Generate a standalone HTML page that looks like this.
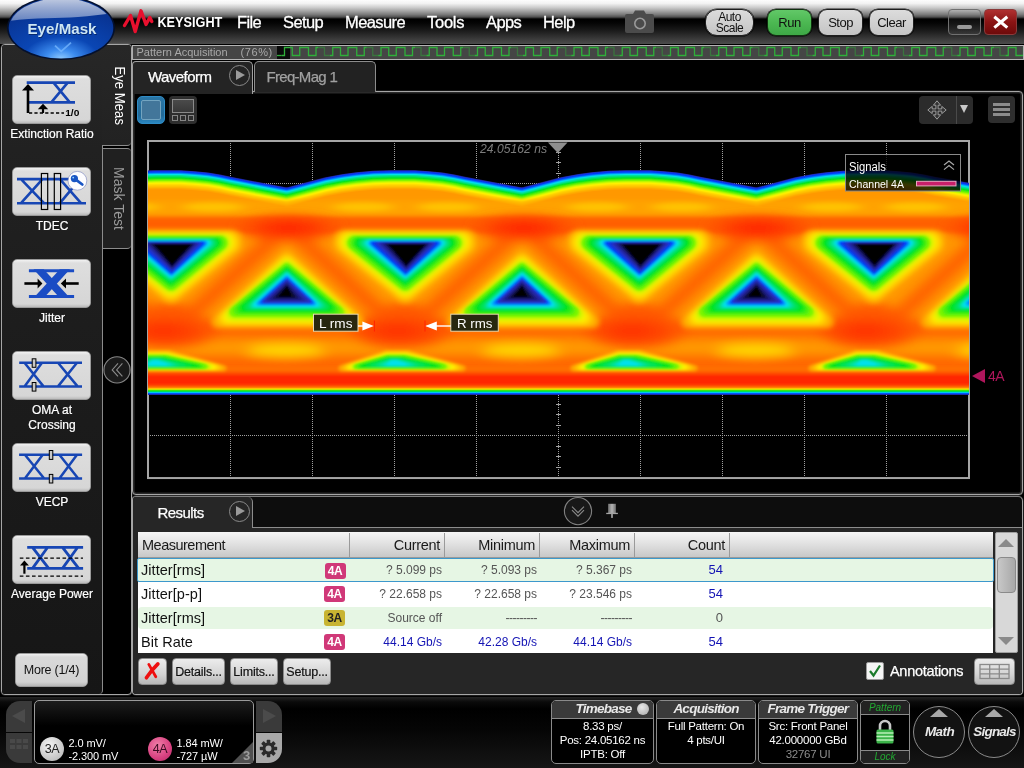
<!DOCTYPE html>
<html lang="en">
<head>
<meta charset="utf-8">
<title>Eye/Mask</title>
<style>
*{box-sizing:border-box;margin:0;padding:0}
html,body{width:1024px;height:768px;overflow:hidden;background:#000}
body{position:relative;font-family:"Liberation Sans",sans-serif;color:#fff;font-size:13px;will-change:transform}
.abs{position:absolute}
/* ---------- top bar ---------- */
#topbar{position:absolute;left:0;top:0;width:1024px;height:45px;
 background:linear-gradient(to bottom,#fdfdfd 0px,#f2f2f2 3.5px,#cccccc 7.5px,#a4a4a4 11px,#7a7a7a 14.5px,#505050 17px,#000 19px,#050505 23px,#1c1c1c 31px,#3a3a3a 39px,#4c4c4c 44px,#000 44px,#000 45px)}
.menu{position:absolute;top:12px;font-size:16.5px;color:#fff;letter-spacing:-0.6px;-webkit-text-stroke:0.3px #fff;line-height:20px;white-space:nowrap}
.tbtn{position:absolute;top:9px;height:27px;border-radius:9px;border:1px solid #1e1e1e;
 background:linear-gradient(to bottom,#dcdcdc,#d0d0d0 50%,#c4c4c4);color:#111;font-size:13px;text-align:center;line-height:25px;letter-spacing:-0.5px;box-shadow:0 0 0 0.6px rgba(0,0,0,0.8)}
/* ---------- pattern bar ---------- */
#patbar{position:absolute;left:132px;top:45px;width:892px;height:15px;background:#454545;border:1px solid #b4b4b4}
#patbar span{position:absolute;left:3.5px;top:0px;font-size:11px;line-height:13px;color:#a8a8a8;white-space:pre}
/* ---------- left panel ---------- */
.lbtn{position:absolute;left:12px;width:79px;height:49px;border-radius:5px;background:linear-gradient(to bottom,#f2f2f2 0,#dedede 3px,#d6d6d6 44px,#a8a8a8 49px);border:1px solid #9a9a9a}
.llab{position:absolute;left:0;width:104px;text-align:center;font-size:12px;line-height:15px;color:#fff;-webkit-text-stroke:0.2px #fff}
/* ---------- panels ---------- */
.tabtxt{position:absolute;font-size:15px;letter-spacing:-0.55px;white-space:nowrap;-webkit-text-stroke:0.25px}
.playc{position:absolute;width:21px;height:21px;border-radius:50%;border:1.5px solid #8a8a8a}
.playc:after{content:"";position:absolute;left:6px;top:3.5px;border-left:9px solid #9a9a9a;border-top:5.5px solid transparent;border-bottom:5.5px solid transparent}
/* ---------- results ---------- */
.rbtn{position:absolute;top:658px;height:27px;border-radius:4px;border:1px solid #8a8a8a;background:linear-gradient(to bottom,#ececec,#d4d4d4 60%,#b8b8b8);color:#111;font-size:12.5px;line-height:27px;text-align:center;letter-spacing:-0.2px;-webkit-text-stroke:0.2px #111}
.row{position:absolute;left:138px;width:855px;height:24px}
.cell{position:absolute;top:0;height:24px;line-height:24px;white-space:nowrap}
.num{font-size:12px;text-align:right}
.nm{left:3px;font-size:14.5px;color:#111;letter-spacing:0.05px}
.badge{position:absolute;left:186px;top:4px;width:21px;height:16px;border-radius:3px;font-size:12px;font-weight:bold;line-height:16px;text-align:center;letter-spacing:-0.5px}
/* ---------- status bar ---------- */
.sbox{position:absolute;top:700px;height:64px;border:1px solid #8a8a8a;border-radius:5px;background:#000;overflow:hidden}
.sbox .hd{position:absolute;left:0;top:0;right:0;height:18px;background:#3a3a3a;border-bottom:1px solid #8a8a8a;font-weight:bold;font-style:italic;font-size:13.5px;line-height:16px;color:#e8e8e8;text-align:center;letter-spacing:-0.75px}
.sbox .ln{position:absolute;left:0;right:0;text-align:center;font-size:11.5px;line-height:14px;color:#fff;white-space:nowrap;letter-spacing:-0.25px}
</style>
</head>
<body>
<!-- ================= TOP BAR ================= -->
<div id="topbar"></div>
<!-- keysight logo -->
<svg class="abs" style="left:122px;top:8px" width="104" height="28" viewBox="0 0 104 28">
 <path d="M2.5 17.5 L8.5 7.5 L13.2 23.5 L19 2.8 L24 16.5 L27.8 9.5 L29.8 13.5" fill="none" stroke="#e8102e" stroke-width="3.4" stroke-linejoin="round" stroke-linecap="round"/>
 <text x="35.4" y="19" font-family="Liberation Sans, sans-serif" font-weight="bold" font-size="14.5" fill="#fff" textLength="65" lengthAdjust="spacingAndGlyphs">KEYSIGHT</text>
</svg>
<div class="menu" style="left:237px">File</div>
<div class="menu" style="left:283px">Setup</div>
<div class="menu" style="left:345px">Measure</div>
<div class="menu" style="left:427px;letter-spacing:-0.25px">Tools</div>
<div class="menu" style="left:486px">Apps</div>
<div class="menu" style="left:543px">Help</div>
<!-- camera -->
<svg class="abs" style="left:624px;top:9px" width="32" height="26" viewBox="0 0 32 26">
 <path d="M3 5 h6 l2 -3.5 h9 l2 3.5 h6 a2 2 0 0 1 2 2 v15 a2 2 0 0 1 -2 2 h-25 a2 2 0 0 1 -2 -2 v-15 a2 2 0 0 1 2 -2z" fill="#4b4b4b"/>
 <circle cx="16" cy="14.5" r="5.2" fill="none" stroke="#9a9a9a" stroke-width="1.6"/>
</svg>
<div class="tbtn" style="left:705px;width:49px;font-size:12px;line-height:11px;padding-top:2px;border-radius:12px">Auto<br>Scale</div>
<div class="tbtn" style="left:767px;width:45px;background:linear-gradient(to bottom,#62c868,#4cb852 50%,#3ea846);border-color:#10300f">Run</div>
<div class="tbtn" style="left:818px;width:45px">Stop</div>
<div class="tbtn" style="left:869px;width:45px">Clear</div>
<!-- min / close -->
<div class="abs" style="left:948px;top:9px;width:33px;height:26px;border:1px solid #707070;border-radius:4px;background:linear-gradient(to bottom,rgba(255,255,255,0.04),rgba(255,255,255,0.08))"></div>
<div class="abs" style="left:957px;top:25px;width:15px;height:4px;border-radius:2px;background:#9a9a9a"></div>
<div class="abs" style="left:984px;top:9px;width:33px;height:26px;border:1px solid #8a3a3a;border-radius:4px;background:linear-gradient(to bottom,#b03030,#8a1414 50%,#6e0a0a)"></div>
<svg class="abs" style="left:984px;top:9px" width="33" height="26" viewBox="0 0 33 26"><path d="M10.3 7.8 L23.3 18.6 M23.3 7.8 L10.3 18.6" stroke="#fff" stroke-width="3.1" stroke-linecap="butt"/></svg>
<!-- pattern bar -->
<div id="patbar"><span>Pattern Acquisition</span><span style="left:107.5px;letter-spacing:0.6px">(76%)</span></div>
<div class="abs" style="left:277px;top:46px;width:13px;height:13px;background:#0a0a0a"></div>
<svg class="abs" style="left:277px;top:46px" width="746" height="13" viewBox="0 0 746 13">
 <defs>
  <g id="pw">
   <path d="M-2.75 9.5 H0 V1.5 H7.75 V9.5 H15.25 V1.5 H24 V9.5 H31.5 V1.5 H34" fill="none" stroke="#2fb03a" stroke-width="1.3"/>
   <path d="M34 1.5 H40 V9.5 H45.5" fill="none" stroke="#3a743e" stroke-width="1.3"/>
  </g>
 </defs>
 <path d="M0 9.5 H4.75" fill="none" stroke="#2fb03a" stroke-width="1.3"/>
 <use href="#pw" x="7.5"/><use href="#pw" x="55.75"/><use href="#pw" x="104"/><use href="#pw" x="152.25"/><use href="#pw" x="200.5"/><use href="#pw" x="248.75"/><use href="#pw" x="297"/><use href="#pw" x="345.25"/><use href="#pw" x="393.5"/><use href="#pw" x="441.75"/><use href="#pw" x="490"/><use href="#pw" x="538.25"/><use href="#pw" x="586.5"/><use href="#pw" x="634.75"/><use href="#pw" x="683"/><use href="#pw" x="731.25"/>
</svg>
<!-- ================= LEFT PANEL ================= -->
<div class="abs" style="left:1px;top:44px;width:131px;height:651px;background:#000;border:1px solid #a6a6a6;border-radius:4px;box-shadow:0 0 0 0.5px rgba(150,150,150,0.35)"></div>
<!-- main body -->
<div class="abs" style="left:2px;top:45px;width:101px;height:649px;background:linear-gradient(to bottom,#272727 0,#212121 16%,#1c1c1c 50%,#161616 100%);border-right:1px solid #8c8c8c;border-radius:3px 0 4px 3px"></div>
<!-- Eye Meas tab (active) -->
<div class="abs" style="left:102px;top:45px;width:29px;height:101px;background:linear-gradient(to bottom,#272727,#222222);border-bottom:1px solid #8c8c8c;border-radius:0 3px 4px 0"></div>
<svg class="abs" style="left:103px;top:60px" width="29" height="90"><text transform="translate(12,6.5) rotate(90)" font-family="Liberation Sans, sans-serif" font-size="15" fill="#fff" textLength="58.5" lengthAdjust="spacingAndGlyphs">Eye Meas</text></svg>
<!-- Mask Test tab -->
<div class="abs" style="left:102px;top:148px;width:29px;height:101px;background:#202020;border:1px solid #8c8c8c;border-right:none;border-radius:0 4px 4px 0"></div>
<svg class="abs" style="left:103px;top:150px" width="28" height="100"><text transform="translate(10.5,17) rotate(90)" font-family="Liberation Sans, sans-serif" font-size="15" fill="#9a9a9a" textLength="63" lengthAdjust="spacingAndGlyphs">Mask Test</text></svg>
<!-- collapse button -->
<svg class="abs" style="left:103px;top:356px" width="28" height="28" viewBox="0 0 28 28"><circle cx="14" cy="13.9" r="13.1" fill="#1a1a1a" stroke="#868686" stroke-width="1.1"/><path d="M15 7.4 L9.2 13.9 L15 20.4 M19.4 7.4 L13.6 13.9 L19.4 20.4" fill="none" stroke="#8a8a8a" stroke-width="1.1"/></svg>

<!-- 1 Extinction Ratio -->
<div class="lbtn" style="top:75px"></div>
<svg class="abs" style="left:12px;top:75px" width="79" height="49" viewBox="0 0 79 49">
 <g stroke="#1746b4" stroke-width="2.6" fill="none"><path d="M14.7 7.6 H63 M17 27.4 H63 M41.5 7.6 L57.8 27.4 M39.3 27.4 L55.7 7.6"/></g>
 <path d="M16 38 V12" stroke="#000" stroke-width="2.6" fill="none"/><path d="M10 15.6 L16 9 L22 15.6z" fill="#000"/>
 <path d="M17 38 H52" stroke="#000" stroke-width="1.3" stroke-dasharray="3.2 2.2" fill="none"/>
 <path d="M31 38 V32" stroke="#000" stroke-width="2.2"/><path d="M25.8 34.2 L31 28.8 L36.2 34.2z" fill="#000"/>
 <text x="53.2" y="41" font-family="Liberation Sans, sans-serif" font-weight="bold" font-size="9" fill="#000" textLength="14.2" lengthAdjust="spacingAndGlyphs">1/0</text>
</svg>
<div class="llab" style="top:127px">Extinction Ratio</div>
<!-- 2 TDEC -->
<div class="lbtn" style="top:167px"></div>
<svg class="abs" style="left:12px;top:167px" width="79" height="49" viewBox="0 0 79 49">
 <g stroke="#1746b4" stroke-width="2.6" fill="none"><path d="M5 12.1 H58 M5 36.2 H74 M9 12.1 L32 36.2 M9 36.2 L30.5 12.1 M47.9 12.1 L69 36.2 M47.9 36.2 L68 12.1"/></g>
 <rect x="29.4" y="6.5" width="6.3" height="36" fill="none" stroke="#000" stroke-width="1.2"/>
 <rect x="42.3" y="6.5" width="6.3" height="36" fill="none" stroke="#000" stroke-width="1.2"/>
 <circle cx="65.4" cy="13.8" r="9.4" fill="#fdfdff" stroke="#8a94c4" stroke-width="0.7"/>
 <circle cx="62.4" cy="11.6" r="3.6" fill="#1a56c4"/><path d="M63.5 12.4 L70.3 17.5" stroke="#1a56c4" stroke-width="2.8" stroke-linecap="round"/><circle cx="61.2" cy="10.6" r="0.9" fill="#9adcff"/>
</svg>
<div class="llab" style="top:219px">TDEC</div>
<!-- 3 Jitter -->
<div class="lbtn" style="top:259px"></div>
<svg class="abs" style="left:12px;top:259px" width="79" height="49" viewBox="0 0 79 49">
 <g stroke="#1a4cc4" fill="none"><path d="M16.9 11.8 H62.1 M16.9 37.4 H62.1" stroke-width="3"/></g><path d="M21.5 10.3 H31.7 L58 38.9 H47.9 Z" fill="#1a4cc4"/><path d="M58 10.3 H47.9 L21.5 38.9 H31.7 Z" fill="#1a4cc4"/>
 <path d="M12.4 24.5 H26" stroke="#000" stroke-width="2.6"/><path d="M25.6 19.5 L30.4 24.5 L25.6 29.5z" fill="#000"/>
 <path d="M66.7 24.5 H53.5" stroke="#000" stroke-width="2.6"/><path d="M54 19.5 L48.8 24.5 L54 29.5z" fill="#000"/>
</svg>
<div class="llab" style="top:311px">Jitter</div>
<!-- 4 OMA at Crossing -->
<div class="lbtn" style="top:351px"></div>
<svg class="abs" style="left:12px;top:351px" width="79" height="49" viewBox="0 0 79 49">
 <g stroke="#1746b4" stroke-width="2.5" fill="none"><path d="M7.2 11.7 H70 M7.2 35.4 H70 M12.5 11.7 L31.5 35.4 M12.5 35.4 L30 11.7 M46 11.7 L65.6 35.4 M46 35.4 L65 11.7"/></g>
 <rect x="20.2" y="7.8" width="3.7" height="8.5" fill="#c8c8c8" stroke="#000" stroke-width="1"/>
 <rect x="20.2" y="31.5" width="3.7" height="8.6" fill="#c8c8c8" stroke="#000" stroke-width="1"/>
</svg>
<div class="llab" style="top:403px">OMA at<br>Crossing</div>
<!-- 5 VECP -->
<div class="lbtn" style="top:443px"></div>
<svg class="abs" style="left:12px;top:443px" width="79" height="49" viewBox="0 0 79 49">
 <g stroke="#1746b4" stroke-width="2.5" fill="none"><path d="M7.1 11.8 H70.1 M7.1 35.5 H70.1 M12.9 11.8 L32.2 35.5 M12.9 35.5 L30.7 11.8 M47.4 11.8 L66.2 35.5 M47.4 35.5 L65 11.8"/></g>
 <rect x="37.3" y="7.5" width="3.5" height="8.9" fill="#c8c8c8" stroke="#000" stroke-width="1"/>
 <rect x="37.3" y="31.4" width="3.5" height="8.6" fill="#c8c8c8" stroke="#000" stroke-width="1"/>
</svg>
<div class="llab" style="top:495px">VECP</div>
<!-- 6 Average Power -->
<div class="lbtn" style="top:535px"></div>
<svg class="abs" style="left:12px;top:535px" width="79" height="49" viewBox="0 0 79 49">
 <g stroke="#1746b4" stroke-width="2.8" fill="none"><path d="M15.2 12.3 H71.1 M15.2 33.4 H71.1 M20.5 12.3 L36.7 33.4 M20.5 33.4 L35.7 12.3 M50.5 12.3 L66.7 33.4 M50.5 33.4 L65.7 12.3"/></g>
 <path d="M7.8 23.2 H71 M7.8 41.2 H71" stroke="#000" stroke-width="1.3" stroke-dasharray="3.6 2.5" fill="none"/>
 <path d="M12.4 38.7 V29" stroke="#000" stroke-width="2.2"/><path d="M8 30.4 L12.4 25.6 L16.9 30.4z" fill="#000"/>
</svg>
<div class="llab" style="top:587px">Average Power</div>
<!-- More -->
<div class="lbtn" style="left:15px;top:653px;width:73px;height:34px;background:linear-gradient(to bottom,#f0f0f0 0,#dadada 3px,#d2d2d2 28px,#a8a8a8 34px);color:#111;font-size:12.5px;line-height:33px;text-align:center;letter-spacing:-0.2px">More (1/4)</div>
<!-- eye/mask button -->
<svg class="abs" style="left:0;top:0" width="130" height="66" viewBox="0 0 130 66">
 <defs>
  <radialGradient id="emg" cx="50%" cy="100%" r="80%" fx="50%" fy="100%">
   <stop offset="0" stop-color="#8cc8ff"/><stop offset="0.18" stop-color="#3c8cf0"/><stop offset="0.45" stop-color="#0a46b4"/><stop offset="1" stop-color="#083494"/>
  </radialGradient>
  <linearGradient id="emh" x1="0" y1="0" x2="0" y2="1">
   <stop offset="0" stop-color="#eef0f4" stop-opacity="0.85"/><stop offset="1" stop-color="#c4d0e8" stop-opacity="0.5"/>
  </linearGradient>
  <clipPath id="emc"><ellipse cx="61" cy="28" rx="51.5" ry="29.8"/></clipPath>
 </defs>
 <ellipse cx="61" cy="28" rx="54" ry="32" fill="#04102e"/>
 <ellipse cx="61" cy="28" rx="52.3" ry="30.5" fill="url(#emg)"/>
 <g clip-path="url(#emc)"><path d="M0 -4 H130 V12 C112 12.5 96 15.5 78 17 C58 18.5 36 17.5 8 21 Z" fill="url(#emh)"/></g>
 <text x="62.6" y="34.6" text-anchor="middle" font-family="Liberation Sans, sans-serif" font-weight="bold" font-size="15" fill="#06225e" opacity="0.8" textLength="69" lengthAdjust="spacingAndGlyphs">Eye/Mask</text>
 <text x="62" y="33.8" text-anchor="middle" font-family="Liberation Sans, sans-serif" font-weight="bold" font-size="15" fill="#cde6f4" textLength="69" lengthAdjust="spacingAndGlyphs">Eye/Mask</text>
 <path d="M55 45.6 L61.2 51.4 L71 42.6" fill="none" stroke="#78b8ff" stroke-width="1.8" opacity="0.75"/>
</svg>
<!-- ================= WAVEFORM PANEL ================= -->
<div class="abs" style="left:132px;top:91px;width:891px;height:404px;background:#000;border:1px solid #a6a6a6;border-radius:0 4px 4px 4px;box-shadow:inset 0 0 0 1.6px #2a2a2a, 0 0 0 0.5px rgba(150,150,150,0.3)"></div>
<!-- tabs -->
<div class="abs" style="left:132px;top:61px;width:121px;height:33px;background:#242424;border:1px solid #a0a0a0;border-bottom:none;border-radius:4px 5px 0 0"></div>
<div class="tabtxt" style="left:148px;top:68px;color:#fff">Waveform</div>
<div class="playc" style="left:229px;top:65px"></div>
<div class="abs" style="left:254px;top:61px;width:122px;height:31px;background:#222;border:1px solid #8c8c8c;border-bottom:none;border-radius:5px 5px 0 0"></div>
<div class="tabtxt" style="left:266.5px;top:68px;color:#a0a0a0;letter-spacing:-0.7px">Freq-Mag 1</div>
<!-- layout icons -->
<div class="abs" style="left:137px;top:96px;width:28px;height:28px;border-radius:5px;background:linear-gradient(to bottom,#2a76a6,#236a98 70%,#2a86c0);border:1px solid #2f8cc6"></div>
<div class="abs" style="left:141px;top:100px;width:20px;height:20px;border-radius:2px;background:#42769a;border:1px solid #72a4c0"></div>
<div class="abs" style="left:169px;top:96px;width:28px;height:28px;border-radius:4px;background:#2e2e2e"></div>
<div class="abs" style="left:172px;top:99px;width:22px;height:14px;background:linear-gradient(to bottom,#4a4a4a,#383838);border:1px solid #8a8a8a"></div>
<div class="abs" style="left:172px;top:115px;width:6px;height:6px;border:1px solid #868686"></div>
<div class="abs" style="left:180px;top:115px;width:6px;height:6px;border:1px solid #868686"></div>
<div class="abs" style="left:188px;top:115px;width:6px;height:6px;border:1px solid #868686"></div>
<!-- move / menu -->
<div class="abs" style="left:919px;top:96px;width:54px;height:28px;border-radius:4px;background:#2b2b2b"></div>
<div class="abs" style="left:956px;top:96px;width:1px;height:28px;background:#4a4a4a"></div>
<svg class="abs" style="left:927px;top:100px" width="20" height="20" viewBox="0 0 20 20"><path d="M10 0.8 L13.6 5.2 H11.1 V8.9 H14.8 V6.4 L19.2 10 L14.8 13.6 V11.1 H11.1 V14.8 H13.6 L10 19.2 L6.4 14.8 H8.9 V11.1 H5.2 V13.6 L0.8 10 L5.2 6.4 V8.9 H8.9 V5.2 H6.4 Z" fill="#333" stroke="#a8a8a8" stroke-width="0.9"/></svg>
<div class="abs" style="left:960px;top:105px;border-top:8px solid #c8c8c8;border-left:4px solid transparent;border-right:4px solid transparent"></div>
<div class="abs" style="left:988px;top:96px;width:27px;height:27px;border-radius:4px;background:#2e2e2e"></div>
<div class="abs" style="left:993px;top:103px;width:17px;height:3px;background:#8c8c8c"></div>
<div class="abs" style="left:993px;top:108px;width:17px;height:3px;background:#8c8c8c"></div>
<div class="abs" style="left:993px;top:113px;width:17px;height:3px;background:#8c8c8c"></div>
<svg class="abs" style="left:146px;top:139px" width="827" height="343" viewBox="146 139 827 343">
<defs>
<clipPath id="pc"><rect x="148" y="142" width="821" height="335"/></clipPath>
<filter id="f1" filterUnits="userSpaceOnUse" x="60" y="120" width="1000" height="320"><feGaussianBlur stdDeviation="1.1"/></filter>
<filter id="f0" filterUnits="userSpaceOnUse" x="60" y="120" width="1000" height="320"><feGaussianBlur stdDeviation="1.2 0.75"/></filter>
<filter id="f2" filterUnits="userSpaceOnUse" x="60" y="120" width="1000" height="320"><feGaussianBlur stdDeviation="1.5"/></filter>
<filter id="f3" filterUnits="userSpaceOnUse" x="60" y="120" width="1000" height="320"><feGaussianBlur stdDeviation="2.6"/></filter>
<filter id="f9" filterUnits="userSpaceOnUse" x="60" y="120" width="1000" height="320"><feGaussianBlur stdDeviation="7 2.2"/></filter>
<filter id="f8" filterUnits="userSpaceOnUse" x="60" y="120" width="1000" height="320"><feGaussianBlur stdDeviation="7 5"/></filter>
<g id="dn">
<polygon points="-60,242.8 60,242.8 0,291" fill="#ff9800" stroke="#ff9800" stroke-width="26" stroke-linejoin="round"/>
<polygon points="-59.3,242.7 59.2,242.7 0,290.3" fill="#ffa600" stroke="#ffa600" stroke-width="24.7" stroke-linejoin="round"/>
<polygon points="-58.7,242.6 58.3,242.6 0,289.7" fill="#ffb500" stroke="#ffb500" stroke-width="23.3" stroke-linejoin="round"/>
<polygon points="-58,242.5 57.5,242.5 0,289" fill="#ffc300" stroke="#ffc300" stroke-width="22" stroke-linejoin="round"/>
<polygon points="-56.7,242.4 56,242.4 0,288" fill="#ffd200" stroke="#ffd200" stroke-width="20.7" stroke-linejoin="round"/>
<polygon points="-55.3,242.3 54.5,242.3 0,287" fill="#ffe100" stroke="#ffe100" stroke-width="19.3" stroke-linejoin="round"/>
<polygon points="-54,242.2 53,242.2 0,286" fill="#fff000" stroke="#fff000" stroke-width="18" stroke-linejoin="round"/>
<polygon points="-52.8,242.5 51.7,242.5 0,285" fill="#def700" stroke="#def700" stroke-width="16.7" stroke-linejoin="round"/>
<polygon points="-51.7,242.7 50.3,242.7 0,284" fill="#b0f800" stroke="#b0f800" stroke-width="15.3" stroke-linejoin="round"/>
<polygon points="-50.5,243 49,243 0,283" fill="#78f500" stroke="#78f500" stroke-width="14" stroke-linejoin="round"/>
</g>
<g id="dni">
<polygon points="-50.5,243 49,243 0,283" fill="#78f500" stroke="#78f500" stroke-width="14" stroke-linejoin="round"/>
<polygon points="-48.7,243 47.3,243 0,281.7" fill="#50ef0a" stroke="#50ef0a" stroke-width="12.7" stroke-linejoin="round"/>
<polygon points="-46.8,243 45.7,243 0,280.3" fill="#28ea14" stroke="#28ea14" stroke-width="11.3" stroke-linejoin="round"/>
<polygon points="-45,243 44,243 0,279" fill="#00e41e" stroke="#00e41e" stroke-width="10" stroke-linejoin="round"/>
<polygon points="-43.3,243.1 42.5,243.1 0,278" fill="#00e33c" stroke="#00e33c" stroke-width="9.3" stroke-linejoin="round"/>
<polygon points="-41.7,243.2 41,243.2 0,277" fill="#00e25a" stroke="#00e25a" stroke-width="8.7" stroke-linejoin="round"/>
<polygon points="-40,243.3 39.5,243.3 0,276" fill="#00e178" stroke="#00e178" stroke-width="8" stroke-linejoin="round"/>
<polygon points="-38.5,243.3 38.2,243.3 0,275.3" fill="#00e19e" stroke="#00e19e" stroke-width="7.3" stroke-linejoin="round"/>
<polygon points="-37,243.2 36.8,243.2 0,274.7" fill="#00e1c5" stroke="#00e1c5" stroke-width="6.7" stroke-linejoin="round"/>
<polygon points="-35.5,243.2 35.5,243.2 0,274" fill="#00e1eb" stroke="#00e1eb" stroke-width="6" stroke-linejoin="round"/>
<polygon points="-34.2,243.2 34,243.2 0.2,273.2" fill="#00a7fb" stroke="#00a7fb" stroke-width="5.3" stroke-linejoin="round"/>
<polygon points="-32.8,243.3 32.5,243.3 0.3,272.3" fill="#0070fd" stroke="#0070fd" stroke-width="4.7" stroke-linejoin="round"/>
<polygon points="-31.5,243.3 31,243.3 0.5,271.5" fill="#003cfa" stroke="#003cfa" stroke-width="4" stroke-linejoin="round"/>
<polygon points="-29.7,243.5 29.7,243.5 0.7,270.7" fill="#0d38e6" stroke="#0d38e6" stroke-width="3.7" stroke-linejoin="round"/>
<polygon points="-27.8,243.6 28.3,243.6 0.8,269.8" fill="#1b34d2" stroke="#1b34d2" stroke-width="3.3" stroke-linejoin="round"/>
<polygon points="-26,243.8 27,243.8 1,269" fill="#2830be" stroke="#2830be" stroke-width="3" stroke-linejoin="round"/>
<polygon points="-24.3,243.9 25.7,243.9 1,268.4" fill="#252aaa" stroke="#252aaa" stroke-width="2.7" stroke-linejoin="round"/>
<polygon points="-22.7,243.9 24.3,243.9 1,267.9" fill="#212496" stroke="#212496" stroke-width="2.3" stroke-linejoin="round"/>
<polygon points="-21,244 23,244 1,267.3" fill="#1e1e82" stroke="#1e1e82" stroke-width="2" stroke-linejoin="round"/>
<polygon points="-19.2,244.2 21.7,244.2 1,266.4" fill="#141457" stroke="#141457" stroke-width="1.7" stroke-linejoin="round"/>
<polygon points="-17.3,244.5 20.3,244.5 1,265.4" fill="#0a0a2b" stroke="#0a0a2b" stroke-width="1.3" stroke-linejoin="round"/>
<polygon points="-15.5,244.7 19,244.7 1,264.5" fill="#000000" stroke="#000000" stroke-width="1" stroke-linejoin="round"/>
</g>
<g id="up">
<polygon points="0,256 71,321.5 -69,321.5" fill="#ff9800" stroke="#ff9800" stroke-width="14" stroke-linejoin="round"/>
<polygon points="0,257.7 68.8,320.7 -66.8,320.7" fill="#ffa600" stroke="#ffa600" stroke-width="13.7" stroke-linejoin="round"/>
<polygon points="0,259.3 66.7,319.8 -64.7,319.8" fill="#ffb500" stroke="#ffb500" stroke-width="13.3" stroke-linejoin="round"/>
<polygon points="0,261 64.5,319 -62.5,319" fill="#ffc300" stroke="#ffc300" stroke-width="13" stroke-linejoin="round"/>
<polygon points="0,262.3 62.5,318.2 -60.7,318.2" fill="#ffd200" stroke="#ffd200" stroke-width="12.7" stroke-linejoin="round"/>
<polygon points="0,263.7 60.5,317.3 -58.8,317.3" fill="#ffe100" stroke="#ffe100" stroke-width="12.3" stroke-linejoin="round"/>
<polygon points="0,265 58.5,316.5 -57,316.5" fill="#fff000" stroke="#fff000" stroke-width="12" stroke-linejoin="round"/>
<polygon points="0,266.2 56.2,314.8 -55.3,314.8" fill="#def700" stroke="#def700" stroke-width="11.3" stroke-linejoin="round"/>
<polygon points="0,267.3 53.8,313.2 -53.7,313.2" fill="#b0f800" stroke="#b0f800" stroke-width="10.7" stroke-linejoin="round"/>
<polygon points="0,268.5 51.5,311.5 -52,311.5" fill="#78f500" stroke="#78f500" stroke-width="10" stroke-linejoin="round"/>
</g>
<g id="upi">
<polygon points="0,268.5 51.5,311.5 -52,311.5" fill="#78f500" stroke="#78f500" stroke-width="10" stroke-linejoin="round"/>
<polygon points="0,269.7 48.3,310.2 -48.7,310.2" fill="#50ef0a" stroke="#50ef0a" stroke-width="9.3" stroke-linejoin="round"/>
<polygon points="0,270.8 45.2,308.8 -45.3,308.8" fill="#28ea14" stroke="#28ea14" stroke-width="8.7" stroke-linejoin="round"/>
<polygon points="0,272 42,307.5 -42,307.5" fill="#00e41e" stroke="#00e41e" stroke-width="8" stroke-linejoin="round"/>
<polygon points="0,272.8 39.7,306.9 -39.7,306.9" fill="#00e33c" stroke="#00e33c" stroke-width="7.3" stroke-linejoin="round"/>
<polygon points="0,273.7 37.3,306.4 -37.3,306.4" fill="#00e25a" stroke="#00e25a" stroke-width="6.7" stroke-linejoin="round"/>
<polygon points="0,274.5 35,305.8 -35,305.8" fill="#00e178" stroke="#00e178" stroke-width="6" stroke-linejoin="round"/>
<polygon points="0,275.2 33,305.4 -33.5,305.4" fill="#00e19e" stroke="#00e19e" stroke-width="5.7" stroke-linejoin="round"/>
<polygon points="0,275.8 31,304.9 -32,304.9" fill="#00e1c5" stroke="#00e1c5" stroke-width="5.3" stroke-linejoin="round"/>
<polygon points="0,276.5 29,304.5 -30.5,304.5" fill="#00e1eb" stroke="#00e1eb" stroke-width="5" stroke-linejoin="round"/>
<polygon points="0,277.8 27.2,303.5 -28.2,303.5" fill="#00a7fb" stroke="#00a7fb" stroke-width="4.7" stroke-linejoin="round"/>
<polygon points="0,279.2 25.3,302.6 -25.8,302.6" fill="#0070fd" stroke="#0070fd" stroke-width="4.3" stroke-linejoin="round"/>
<polygon points="0,280.5 23.5,301.6 -23.5,301.6" fill="#003cfa" stroke="#003cfa" stroke-width="4" stroke-linejoin="round"/>
<polygon points="0,280.8 23,301.5 -23,301.5" fill="#0d38e6" stroke="#0d38e6" stroke-width="3.7" stroke-linejoin="round"/>
<polygon points="0,281.2 22.5,301.4 -22.5,301.4" fill="#1b34d2" stroke="#1b34d2" stroke-width="3.3" stroke-linejoin="round"/>
<polygon points="0,281.5 22,301.3 -22,301.3" fill="#2830be" stroke="#2830be" stroke-width="3" stroke-linejoin="round"/>
<polygon points="0,282.3 19.3,300.5 -20,300.5" fill="#252aaa" stroke="#252aaa" stroke-width="2.7" stroke-linejoin="round"/>
<polygon points="0,283.2 16.7,299.8 -18,299.8" fill="#212496" stroke="#212496" stroke-width="2.3" stroke-linejoin="round"/>
<polygon points="0,284 14,299 -16,299" fill="#1e1e82" stroke="#1e1e82" stroke-width="2" stroke-linejoin="round"/>
<polygon points="0,285.2 10.8,298 -13.2,298" fill="#141457" stroke="#141457" stroke-width="1.7" stroke-linejoin="round"/>
<polygon points="0,286.3 7.7,297 -10.3,297" fill="#0a0a2b" stroke="#0a0a2b" stroke-width="1.3" stroke-linejoin="round"/>
<polygon points="0,287.5 4.5,296 -7.5,296" fill="#000000" stroke="#000000" stroke-width="1" stroke-linejoin="round"/>
</g>
<g id="ln">
<polygon points="-15.8,353 7.2,353 62,368.2 -60,368.2" fill="#ff9800" stroke="#ff9800" stroke-width="6" stroke-linejoin="round"/>
<polygon points="-15.4,353.5 6.9,353.5 60.1,368 -58.1,368" fill="#ffa600" stroke="#ffa600" stroke-width="5.9" stroke-linejoin="round"/>
<polygon points="-15,354.1 6.6,354.1 58.1,367.9 -56.1,367.9" fill="#ffb500" stroke="#ffb500" stroke-width="5.7" stroke-linejoin="round"/>
<polygon points="-14.6,354.6 6.3,354.6 56.2,367.7 -54.2,367.7" fill="#ffc300" stroke="#ffc300" stroke-width="5.6" stroke-linejoin="round"/>
<polygon points="-14.4,355.1 5.8,355.1 54.3,367.5 -52.6,367.5" fill="#ffd200" stroke="#ffd200" stroke-width="5.5" stroke-linejoin="round"/>
<polygon points="-14.2,355.5 5.4,355.5 52.3,367.4 -51,367.4" fill="#ffe100" stroke="#ffe100" stroke-width="5.3" stroke-linejoin="round"/>
<polygon points="-14,356 4.9,356 50.4,367.2 -49.4,367.2" fill="#fff000" stroke="#fff000" stroke-width="5.2" stroke-linejoin="round"/>
<polygon points="-13.7,356.5 4.4,356.5 47.9,367 -47.9,367" fill="#def700" stroke="#def700" stroke-width="4.9" stroke-linejoin="round"/>
<polygon points="-13.5,357.1 3.9,357.1 45.3,366.7 -46.3,366.7" fill="#b0f800" stroke="#b0f800" stroke-width="4.7" stroke-linejoin="round"/>
<polygon points="-13.2,357.6 3.4,357.6 42.8,366.5 -44.8,366.5" fill="#78f500" stroke="#78f500" stroke-width="4.4" stroke-linejoin="round"/>
</g>
<g id="lni">
<polygon points="-13.2,357.6 3.4,357.6 42.8,366.5 -44.8,366.5" fill="#78f500" stroke="#78f500" stroke-width="4.4" stroke-linejoin="round"/>
<polygon points="-13,358.1 2.6,358.1 39.9,366.3 -42.6,366.3" fill="#50ef0a" stroke="#50ef0a" stroke-width="4.1" stroke-linejoin="round"/>
<polygon points="-12.8,358.5 1.8,358.5 37.1,366.1 -40.4,366.1" fill="#28ea14" stroke="#28ea14" stroke-width="3.9" stroke-linejoin="round"/>
<polygon points="-12.6,359 1.1,359 34.2,365.9 -38.2,365.9" fill="#00e41e" stroke="#00e41e" stroke-width="3.6" stroke-linejoin="round"/>
<polygon points="-11.8,359.4 -0.2,359.4 28,365.6 -33.3,365.6" fill="#00e33c" stroke="#00e33c" stroke-width="3.4" stroke-linejoin="round"/>
<polygon points="-11,359.9 -1.4,359.9 21.7,365.4 -28.4,365.4" fill="#00e25a" stroke="#00e25a" stroke-width="3.2" stroke-linejoin="round"/>
<polygon points="-10.2,360.3 -2.6,360.3 15.5,365.1 -23.5,365.1" fill="#00e178" stroke="#00e178" stroke-width="3" stroke-linejoin="round"/>
<polygon points="-9.8,360.7 -3.6,360.7 11.6,364.9 -19.9,364.9" fill="#00e19e" stroke="#00e19e" stroke-width="2.8" stroke-linejoin="round"/>
<polygon points="-9.3,361.2 -4.5,361.2 7.7,364.6 -16.4,364.6" fill="#00e1c5" stroke="#00e1c5" stroke-width="2.6" stroke-linejoin="round"/>
<polygon points="-8.9,361.6 -5.5,361.6 3.8,364.4 -12.8,364.4" fill="#00e1eb" stroke="#00e1eb" stroke-width="2.4" stroke-linejoin="round"/>
</g>
</defs>
<rect x="148" y="141" width="821" height="337.05" fill="#000" stroke="#a6a6a6" stroke-width="2"/>
<g stroke="#a0a0a0" stroke-width="1" stroke-dasharray="1 1" fill="none">
<path d="M230.5 143 V477"/>
<path d="M312.5 143 V477"/>
<path d="M394.5 143 V477"/>
<path d="M476.5 143 V477"/>
<path d="M558.5 143 V477"/>
<path d="M640.5 143 V477"/>
<path d="M722.5 143 V477"/>
<path d="M804.5 143 V477"/>
<path d="M886.5 143 V477"/>
<path d="M150 183.5 H968"/>
<path d="M150 225.5 H968"/>
<path d="M150 267.5 H968"/>
<path d="M150 309.5 H968"/>
<path d="M150 351.5 H968"/>
<path d="M150 393.5 H968"/>
<path d="M150 435.5 H968"/>
</g>
<path d="M556 152.5 h5 M556 162.5 h5 M556 173.5 h5 M556 194.5 h5 M556 204.5 h5 M556 215.5 h5 M556 236.5 h5 M556 246.5 h5 M556 257.5 h5 M556 278.5 h5 M556 288.5 h5 M556 299.5 h5 M556 320.5 h5 M556 330.5 h5 M556 341.5 h5 M556 362.5 h5 M556 372.5 h5 M556 383.5 h5 M556 404.5 h5 M556 414.5 h5 M556 425.5 h5 M556 446.5 h5 M556 456.5 h5 M556 467.5 h5" stroke="#a0a0a0" stroke-width="1" fill="none"/>
<g clip-path="url(#pc)">
<g filter="url(#f0)">
<path d="M52.5 187.6 L91.5 177.3 Q120.5 170.6 156.5 170.2 L180.5 170.2 Q210.5 171.6 230.5 176.8 L286.8 187.6 L325.8 177.3 Q354.8 170.6 390.8 170.2 L414.8 170.2 Q444.8 171.6 464.8 176.8 L522 187.6 L561 177.3 Q590 170.6 626 170.2 L650 170.2 Q680 171.6 700 176.8 L756.5 187.6 L795.5 177.3 Q824.5 170.6 860.5 170.2 L884.5 170.2 Q914.5 171.6 934.5 176.8 L996 187.6 V394.7 H52.5 Z" fill="#252bad"/>
<path d="M52.5 188.1 L91.5 177.8 Q120.5 171.1 156.5 170.7 L180.5 170.7 Q210.5 172.1 230.5 177.3 L286.8 188.1 L325.8 177.8 Q354.8 171.1 390.8 170.7 L414.8 170.7 Q444.8 172.1 464.8 177.3 L522 188.1 L561 177.8 Q590 171.1 626 170.7 L650 170.7 Q680 172.1 700 177.3 L756.5 188.1 L795.5 177.8 Q824.5 171.1 860.5 170.7 L884.5 170.7 Q914.5 172.1 934.5 177.3 L996 188.1 V394.4 H52.5 Z" fill="#2132c8"/>
<path d="M52.5 188.5 L91.5 178.2 Q120.5 171.5 156.5 171.1 L180.5 171.1 Q210.5 172.5 230.5 177.7 L286.8 188.5 L325.8 178.2 Q354.8 171.5 390.8 171.1 L414.8 171.1 Q444.8 172.5 464.8 177.7 L522 188.5 L561 178.2 Q590 171.5 626 171.1 L650 171.1 Q680 172.5 700 177.7 L756.5 188.5 L795.5 178.2 Q824.5 171.5 860.5 171.1 L884.5 171.1 Q914.5 172.5 934.5 177.7 L996 188.5 V394.2 H52.5 Z" fill="#1137e1"/>
<path d="M52.5 189 L91.5 178.7 Q120.5 172 156.5 171.6 L180.5 171.6 Q210.5 173 230.5 178.2 L286.8 189 L325.8 178.7 Q354.8 172 390.8 171.6 L414.8 171.6 Q444.8 173 464.8 178.2 L522 189 L561 178.7 Q590 172 626 171.6 L650 171.6 Q680 173 700 178.2 L756.5 189 L795.5 178.7 Q824.5 172 860.5 171.6 L884.5 171.6 Q914.5 173 934.5 178.2 L996 189 V393.9 H52.5 Z" fill="#003cfa"/>
<path d="M52.5 189.8 L91.5 179.5 Q120.5 172.8 156.5 172.4 L180.5 172.4 Q210.5 173.8 230.5 179 L286.8 189.8 L325.8 179.5 Q354.8 172.8 390.8 172.4 L414.8 172.4 Q444.8 173.8 464.8 179 L522 189.8 L561 179.5 Q590 172.8 626 172.4 L650 172.4 Q680 173.8 700 179 L756.5 189.8 L795.5 179.5 Q824.5 172.8 860.5 172.4 L884.5 172.4 Q914.5 173.8 934.5 179 L996 189.8 V393.5 H52.5 Z" fill="#0070fd"/>
<path d="M52.5 190.6 L91.5 180.3 Q120.5 173.6 156.5 173.2 L180.5 173.2 Q210.5 174.6 230.5 179.8 L286.8 190.6 L325.8 180.3 Q354.8 173.6 390.8 173.2 L414.8 173.2 Q444.8 174.6 464.8 179.8 L522 190.6 L561 180.3 Q590 173.6 626 173.2 L650 173.2 Q680 174.6 700 179.8 L756.5 190.6 L795.5 180.3 Q824.5 173.6 860.5 173.2 L884.5 173.2 Q914.5 174.6 934.5 179.8 L996 190.6 V393 H52.5 Z" fill="#00a7fb"/>
<path d="M52.5 191.4 L91.5 181.1 Q120.5 174.4 156.5 174 L180.5 174 Q210.5 175.4 230.5 180.6 L286.8 191.4 L325.8 181.1 Q354.8 174.4 390.8 174 L414.8 174 Q444.8 175.4 464.8 180.6 L522 191.4 L561 181.1 Q590 174.4 626 174 L650 174 Q680 175.4 700 180.6 L756.5 191.4 L795.5 181.1 Q824.5 174.4 860.5 174 L884.5 174 Q914.5 175.4 934.5 180.6 L996 191.4 V392.6 H52.5 Z" fill="#00e1eb"/>
<path d="M52.5 192.5 L91.5 182.2 Q120.5 175.5 156.5 175.1 L180.5 175.1 Q210.5 176.5 230.5 181.7 L286.8 192.5 L325.8 182.2 Q354.8 175.5 390.8 175.1 L414.8 175.1 Q444.8 176.5 464.8 181.7 L522 192.5 L561 182.2 Q590 175.5 626 175.1 L650 175.1 Q680 176.5 700 181.7 L756.5 192.5 L795.5 182.2 Q824.5 175.5 860.5 175.1 L884.5 175.1 Q914.5 176.5 934.5 181.7 L996 192.5 V392.1 H52.5 Z" fill="#00e19e"/>
<path d="M52.5 193.7 L91.5 183.4 Q120.5 176.7 156.5 176.3 L180.5 176.3 Q210.5 177.7 230.5 182.9 L286.8 193.7 L325.8 183.4 Q354.8 176.7 390.8 176.3 L414.8 176.3 Q444.8 177.7 464.8 182.9 L522 193.7 L561 183.4 Q590 176.7 626 176.3 L650 176.3 Q680 177.7 700 182.9 L756.5 193.7 L795.5 183.4 Q824.5 176.7 860.5 176.3 L884.5 176.3 Q914.5 177.7 934.5 182.9 L996 193.7 V391.7 H52.5 Z" fill="#00e25a"/>
<path d="M52.5 194.8 L91.5 184.5 Q120.5 177.8 156.5 177.4 L180.5 177.4 Q210.5 178.8 230.5 184 L286.8 194.8 L325.8 184.5 Q354.8 177.8 390.8 177.4 L414.8 177.4 Q444.8 178.8 464.8 184 L522 194.8 L561 184.5 Q590 177.8 626 177.4 L650 177.4 Q680 178.8 700 184 L756.5 194.8 L795.5 184.5 Q824.5 177.8 860.5 177.4 L884.5 177.4 Q914.5 178.8 934.5 184 L996 194.8 V391.2 H52.5 Z" fill="#00e41e"/>
<path d="M52.5 195.6 L91.5 185.3 Q120.5 178.6 156.5 178.2 L180.5 178.2 Q210.5 179.6 230.5 184.8 L286.8 195.6 L325.8 185.3 Q354.8 178.6 390.8 178.2 L414.8 178.2 Q444.8 179.6 464.8 184.8 L522 195.6 L561 185.3 Q590 178.6 626 178.2 L650 178.2 Q680 179.6 700 184.8 L756.5 195.6 L795.5 185.3 Q824.5 178.6 860.5 178.2 L884.5 178.2 Q914.5 179.6 934.5 184.8 L996 195.6 V390.8 H52.5 Z" fill="#28ea14"/>
<path d="M52.5 196.4 L91.5 186.1 Q120.5 179.4 156.5 179 L180.5 179 Q210.5 180.4 230.5 185.6 L286.8 196.4 L325.8 186.1 Q354.8 179.4 390.8 179 L414.8 179 Q444.8 180.4 464.8 185.6 L522 196.4 L561 186.1 Q590 179.4 626 179 L650 179 Q680 180.4 700 185.6 L756.5 196.4 L795.5 186.1 Q824.5 179.4 860.5 179 L884.5 179 Q914.5 180.4 934.5 185.6 L996 196.4 V390.4 H52.5 Z" fill="#50ef0a"/>
<path d="M52.5 197.2 L91.5 186.9 Q120.5 180.2 156.5 179.8 L180.5 179.8 Q210.5 181.2 230.5 186.4 L286.8 197.2 L325.8 186.9 Q354.8 180.2 390.8 179.8 L414.8 179.8 Q444.8 181.2 464.8 186.4 L522 197.2 L561 186.9 Q590 180.2 626 179.8 L650 179.8 Q680 181.2 700 186.4 L756.5 197.2 L795.5 186.9 Q824.5 180.2 860.5 179.8 L884.5 179.8 Q914.5 181.2 934.5 186.4 L996 197.2 V390 H52.5 Z" fill="#78f500"/>
<path d="M52.5 198.2 L91.5 187.9 Q120.5 181.2 156.5 180.8 L180.5 180.8 Q210.5 182.2 230.5 187.4 L286.8 198.2 L325.8 187.9 Q354.8 181.2 390.8 180.8 L414.8 180.8 Q444.8 182.2 464.8 187.4 L522 198.2 L561 187.9 Q590 181.2 626 180.8 L650 180.8 Q680 182.2 700 187.4 L756.5 198.2 L795.5 187.9 Q824.5 181.2 860.5 180.8 L884.5 180.8 Q914.5 182.2 934.5 187.4 L996 198.2 V389.7 H52.5 Z" fill="#b0f800"/>
<path d="M52.5 199.2 L91.5 188.9 Q120.5 182.2 156.5 181.8 L180.5 181.8 Q210.5 183.2 230.5 188.4 L286.8 199.2 L325.8 188.9 Q354.8 182.2 390.8 181.8 L414.8 181.8 Q444.8 183.2 464.8 188.4 L522 199.2 L561 188.9 Q590 182.2 626 181.8 L650 181.8 Q680 183.2 700 188.4 L756.5 199.2 L795.5 188.9 Q824.5 182.2 860.5 181.8 L884.5 181.8 Q914.5 183.2 934.5 188.4 L996 199.2 V389.4 H52.5 Z" fill="#def700"/>
<path d="M52.5 200.2 L91.5 189.9 Q120.5 183.2 156.5 182.8 L180.5 182.8 Q210.5 184.2 230.5 189.4 L286.8 200.2 L325.8 189.9 Q354.8 183.2 390.8 182.8 L414.8 182.8 Q444.8 184.2 464.8 189.4 L522 200.2 L561 189.9 Q590 183.2 626 182.8 L650 182.8 Q680 184.2 700 189.4 L756.5 200.2 L795.5 189.9 Q824.5 183.2 860.5 182.8 L884.5 182.8 Q914.5 184.2 934.5 189.4 L996 200.2 V389.1 H52.5 Z" fill="#fff000"/>
<path d="M52.5 201.2 L91.5 190.9 Q120.5 184.2 156.5 183.8 L180.5 183.8 Q210.5 185.2 230.5 190.4 L286.8 201.2 L325.8 190.9 Q354.8 184.2 390.8 183.8 L414.8 183.8 Q444.8 185.2 464.8 190.4 L522 201.2 L561 190.9 Q590 184.2 626 183.8 L650 183.8 Q680 185.2 700 190.4 L756.5 201.2 L795.5 190.9 Q824.5 184.2 860.5 183.8 L884.5 183.8 Q914.5 185.2 934.5 190.4 L996 201.2 V388.8 H52.5 Z" fill="#ffe100"/>
<path d="M52.5 202.1 L91.5 191.8 Q120.5 185.1 156.5 184.7 L180.5 184.7 Q210.5 186.1 230.5 191.3 L286.8 202.1 L325.8 191.8 Q354.8 185.1 390.8 184.7 L414.8 184.7 Q444.8 186.1 464.8 191.3 L522 202.1 L561 191.8 Q590 185.1 626 184.7 L650 184.7 Q680 186.1 700 191.3 L756.5 202.1 L795.5 191.8 Q824.5 185.1 860.5 184.7 L884.5 184.7 Q914.5 186.1 934.5 191.3 L996 202.1 V388.4 H52.5 Z" fill="#ffd200"/>
<path d="M52.5 203.1 L91.5 192.8 Q120.5 186.1 156.5 185.7 L180.5 185.7 Q210.5 187.1 230.5 192.3 L286.8 203.1 L325.8 192.8 Q354.8 186.1 390.8 185.7 L414.8 185.7 Q444.8 187.1 464.8 192.3 L522 203.1 L561 192.8 Q590 186.1 626 185.7 L650 185.7 Q680 187.1 700 192.3 L756.5 203.1 L795.5 192.8 Q824.5 186.1 860.5 185.7 L884.5 185.7 Q914.5 187.1 934.5 192.3 L996 203.1 V388.1 H52.5 Z" fill="#ffc300"/>
<path d="M52.5 204.3 L91.5 194 Q120.5 187.3 156.5 186.9 L180.5 186.9 Q210.5 188.3 230.5 193.5 L286.8 204.3 L325.8 194 Q354.8 187.3 390.8 186.9 L414.8 186.9 Q444.8 188.3 464.8 193.5 L522 204.3 L561 194 Q590 187.3 626 186.9 L650 186.9 Q680 188.3 700 193.5 L756.5 204.3 L795.5 194 Q824.5 187.3 860.5 186.9 L884.5 186.9 Q914.5 188.3 934.5 193.5 L996 204.3 V387.8 H52.5 Z" fill="#ffb500"/>
<path d="M52.5 205.4 L91.5 195.1 Q120.5 188.4 156.5 188 L180.5 188 Q210.5 189.4 230.5 194.6 L286.8 205.4 L325.8 195.1 Q354.8 188.4 390.8 188 L414.8 188 Q444.8 189.4 464.8 194.6 L522 205.4 L561 195.1 Q590 188.4 626 188 L650 188 Q680 189.4 700 194.6 L756.5 205.4 L795.5 195.1 Q824.5 188.4 860.5 188 L884.5 188 Q914.5 189.4 934.5 194.6 L996 205.4 V387.6 H52.5 Z" fill="#ffa600"/>
<path d="M52.5 206.6 L91.5 196.3 Q120.5 189.6 156.5 189.2 L180.5 189.2 Q210.5 190.6 230.5 195.8 L286.8 206.6 L325.8 196.3 Q354.8 189.6 390.8 189.2 L414.8 189.2 Q444.8 190.6 464.8 195.8 L522 206.6 L561 196.3 Q590 189.6 626 189.2 L650 189.2 Q680 190.6 700 195.8 L756.5 206.6 L795.5 196.3 Q824.5 189.6 860.5 189.2 L884.5 189.2 Q914.5 190.6 934.5 195.8 L996 206.6 V387.3 H52.5 Z" fill="#ff9800"/>
</g>
<g filter="url(#f9)">
<rect x="100" y="200" width="920" height="15" fill="#ffaa00" opacity="0.55"/>
<ellipse cx="-105.2" cy="207" rx="30" ry="4.5" fill="#ffcc00" opacity="0.8"/>
<ellipse cx="-21.2" cy="207" rx="30" ry="4.5" fill="#ffcc00" opacity="0.8"/>
<ellipse cx="129" cy="207" rx="30" ry="4.5" fill="#ffcc00" opacity="0.8"/>
<ellipse cx="213" cy="207" rx="30" ry="4.5" fill="#ffcc00" opacity="0.8"/>
<ellipse cx="363.2" cy="207" rx="30" ry="4.5" fill="#ffcc00" opacity="0.8"/>
<ellipse cx="447.2" cy="207" rx="30" ry="4.5" fill="#ffcc00" opacity="0.8"/>
<ellipse cx="597.4" cy="207" rx="30" ry="4.5" fill="#ffcc00" opacity="0.8"/>
<ellipse cx="681.4" cy="207" rx="30" ry="4.5" fill="#ffcc00" opacity="0.8"/>
<ellipse cx="831.6" cy="207" rx="30" ry="4.5" fill="#ffcc00" opacity="0.8"/>
<ellipse cx="915.6" cy="207" rx="30" ry="4.5" fill="#ffcc00" opacity="0.8"/>
<ellipse cx="1065.8" cy="207" rx="30" ry="4.5" fill="#ffcc00" opacity="0.8"/>
<ellipse cx="1149.8" cy="207" rx="30" ry="4.5" fill="#ffcc00" opacity="0.8"/>
<rect x="100" y="216.5" width="920" height="16" fill="#ff6000"/>
</g>
<g filter="url(#f8)">
<path d="M46.5 232 L-53.5 324 M58.5 232 L158.5 324" stroke="#ff6200" stroke-width="16" fill="none"/>
<ellipse cx="54.5" cy="228" rx="50" ry="13" fill="#ff5000"/>
<ellipse cx="54.5" cy="228" rx="34" ry="9" fill="#ff3600"/>
<ellipse cx="54.5" cy="228" rx="16" ry="5" fill="#ff2800"/>
<path d="M280.8 232 L180.8 324 M292.8 232 L392.8 324" stroke="#ff6200" stroke-width="16" fill="none"/>
<ellipse cx="288.8" cy="228" rx="50" ry="13" fill="#ff5000"/>
<ellipse cx="288.8" cy="228" rx="34" ry="9" fill="#ff3600"/>
<ellipse cx="288.8" cy="228" rx="16" ry="5" fill="#ff2800"/>
<path d="M516 232 L416 324 M528 232 L628 324" stroke="#ff6200" stroke-width="16" fill="none"/>
<ellipse cx="524" cy="228" rx="50" ry="13" fill="#ff5000"/>
<ellipse cx="524" cy="228" rx="34" ry="9" fill="#ff3600"/>
<ellipse cx="524" cy="228" rx="16" ry="5" fill="#ff2800"/>
<path d="M750.5 232 L650.5 324 M762.5 232 L862.5 324" stroke="#ff6200" stroke-width="16" fill="none"/>
<ellipse cx="758.5" cy="228" rx="50" ry="13" fill="#ff5000"/>
<ellipse cx="758.5" cy="228" rx="34" ry="9" fill="#ff3600"/>
<ellipse cx="758.5" cy="228" rx="16" ry="5" fill="#ff2800"/>
<path d="M990 232 L890 324 M1002 232 L1102 324" stroke="#ff6200" stroke-width="16" fill="none"/>
<ellipse cx="998" cy="228" rx="50" ry="13" fill="#ff5000"/>
<ellipse cx="998" cy="228" rx="34" ry="9" fill="#ff3600"/>
<ellipse cx="998" cy="228" rx="16" ry="5" fill="#ff2800"/>
<rect x="100" y="319" width="920" height="20" fill="#ff6c00"/>
<ellipse cx="-65.2" cy="314" rx="24" ry="12" fill="#ff5c00"/>
<ellipse cx="-67.2" cy="330" rx="52" ry="18" fill="#ff5600"/>
<ellipse cx="-69.2" cy="331" rx="36" ry="12" fill="#ff4200"/>
<ellipse cx="-71.2" cy="331" rx="18" ry="7" fill="#ff3600"/>
<ellipse cx="169" cy="314" rx="24" ry="12" fill="#ff5c00"/>
<ellipse cx="167" cy="330" rx="52" ry="18" fill="#ff5600"/>
<ellipse cx="165" cy="331" rx="36" ry="12" fill="#ff4200"/>
<ellipse cx="163" cy="331" rx="18" ry="7" fill="#ff3600"/>
<ellipse cx="403.2" cy="314" rx="24" ry="12" fill="#ff5c00"/>
<ellipse cx="401.2" cy="330" rx="52" ry="18" fill="#ff5600"/>
<ellipse cx="399.2" cy="331" rx="36" ry="12" fill="#ff4200"/>
<ellipse cx="397.2" cy="331" rx="18" ry="7" fill="#ff3600"/>
<ellipse cx="637.4" cy="314" rx="24" ry="12" fill="#ff5c00"/>
<ellipse cx="635.4" cy="330" rx="52" ry="18" fill="#ff5600"/>
<ellipse cx="633.4" cy="331" rx="36" ry="12" fill="#ff4200"/>
<ellipse cx="631.4" cy="331" rx="18" ry="7" fill="#ff3600"/>
<ellipse cx="871.6" cy="314" rx="24" ry="12" fill="#ff5c00"/>
<ellipse cx="869.6" cy="330" rx="52" ry="18" fill="#ff5600"/>
<ellipse cx="867.6" cy="331" rx="36" ry="12" fill="#ff4200"/>
<ellipse cx="865.6" cy="331" rx="18" ry="7" fill="#ff3600"/>
<ellipse cx="1105.8" cy="314" rx="24" ry="12" fill="#ff5c00"/>
<ellipse cx="1103.8" cy="330" rx="52" ry="18" fill="#ff5600"/>
<ellipse cx="1101.8" cy="331" rx="36" ry="12" fill="#ff4200"/>
<ellipse cx="1099.8" cy="331" rx="18" ry="7" fill="#ff3600"/>
<rect x="100" y="356" width="920" height="22" fill="#ff5e00" opacity="0.85"/>
<ellipse cx="51.5" cy="350.5" rx="38" ry="6.5" fill="#ffd800"/>
<ellipse cx="285.8" cy="350.5" rx="38" ry="6.5" fill="#ffd800"/>
<ellipse cx="521" cy="350.5" rx="38" ry="6.5" fill="#ffd800"/>
<ellipse cx="755.5" cy="350.5" rx="38" ry="6.5" fill="#ffd800"/>
<ellipse cx="995" cy="350.5" rx="38" ry="6.5" fill="#ffd800"/>
</g>
<g filter="url(#f2)">
<rect x="100" y="366.5" width="920" height="20.7" fill="#ff7800" opacity="0.55"/>
<rect x="100" y="369.5" width="920" height="17.7" fill="#ff6c00"/>
<rect x="100" y="372" width="920" height="14.6" fill="#ff4a00"/>
<rect x="100" y="374.8" width="920" height="10.4" fill="#ff2600"/>
</g>
<g filter="url(#f3)">
<use href="#dn" x="-63.2"/>
<use href="#dn" x="171"/>
<use href="#dn" x="405.2"/>
<use href="#dn" x="639.4"/>
<use href="#dn" x="873.6"/>
<use href="#dn" x="1107.8"/>
<use href="#up" x="52.5"/>
<use href="#up" x="286.8"/>
<use href="#up" x="522"/>
<use href="#up" x="756.5"/>
<use href="#up" x="996"/>
</g>
<g filter="url(#f2)">
<use href="#ln" x="-72.2"/>
<use href="#ln" x="162"/>
<use href="#ln" x="401"/>
<use href="#ln" x="633"/>
<use href="#ln" x="871"/>
<use href="#ln" x="1105.2"/>
</g>
<g filter="url(#f1)">
<use href="#dni" x="-63.2"/>
<use href="#dni" x="171"/>
<use href="#dni" x="405.2"/>
<use href="#dni" x="639.4"/>
<use href="#dni" x="873.6"/>
<use href="#dni" x="1107.8"/>
<use href="#upi" x="52.5"/>
<use href="#upi" x="286.8"/>
<use href="#upi" x="522"/>
<use href="#upi" x="756.5"/>
<use href="#upi" x="996"/>
<use href="#lni" x="-72.2"/>
<use href="#lni" x="162"/>
<use href="#lni" x="401"/>
<use href="#lni" x="633"/>
<use href="#lni" x="871"/>
<use href="#lni" x="1105.2"/>
</g>
</g>
<polygon points="548,142.5 567.5,142.5 557.8,153" fill="#8e8e8e"/>
<text x="480" y="152.5" font-family="Liberation Sans, sans-serif" font-style="italic" font-size="12.5" fill="#7c7c7c" textLength="67" lengthAdjust="spacingAndGlyphs">24.05162 ns</text>
<rect x="845.5" y="154.5" width="115" height="36.5" fill="#000" fill-opacity="0.78" stroke="#8a8a8a" stroke-width="1"/>
<text x="849" y="171" font-family="Liberation Sans, sans-serif" font-size="12.5" fill="#fff" textLength="37" lengthAdjust="spacingAndGlyphs">Signals</text>
<text x="849" y="188" font-family="Liberation Sans, sans-serif" font-size="11.5" fill="#fff" textLength="55" lengthAdjust="spacingAndGlyphs">Channel 4A</text>
<path d="M944 165 L949 161 L954 165 M944 169.6 L949 165.6 L954 169.6" fill="none" stroke="#a8a8a8" stroke-width="1.2"/>
<rect x="916.5" y="181.3" width="39.5" height="4.6" fill="#c8206a" stroke="#e8a8c0" stroke-width="1"/>
<rect x="313.5" y="314.2" width="44.5" height="17" fill="#28280f" stroke="#e8d8b0" stroke-width="1"/>
<text x="319" y="327.6" font-family="Liberation Sans, sans-serif" font-size="13" fill="#fff" textLength="33.5" lengthAdjust="spacingAndGlyphs">L rms</text>
<rect x="450.8" y="314.2" width="47.5" height="17" fill="#28280f" stroke="#e8d8b0" stroke-width="1"/>
<text x="457" y="327.6" font-family="Liberation Sans, sans-serif" font-size="13" fill="#fff" textLength="35.5" lengthAdjust="spacingAndGlyphs">R rms</text>
<path d="M358 326 H363" stroke="#fff" stroke-width="1.4"/><polygon points="362.4,321.6 373.8,326 362.4,330.4" fill="#fff"/>
<path d="M451 326 H436" stroke="#fff" stroke-width="1.4"/><polygon points="436.8,321.6 425.2,326 436.8,330.4" fill="#fff"/>
<path d="M374.4 320.5 V331.5 M425 320.5 V331.5" stroke="#ff2000" stroke-width="0.9"/>
</svg>

<!-- 4A marker -->
<div class="abs" style="left:972px;top:369px;border-right:13px solid #b0165c;border-top:7px solid transparent;border-bottom:7px solid transparent"></div>
<div class="abs" style="left:988px;top:368px;font-size:14px;line-height:16px;color:#b0165c;letter-spacing:-0.5px">4A</div>
<!-- ================= RESULTS PANEL ================= -->
<div class="abs" style="left:132px;top:496px;width:891px;height:199px;background:#0d0d0d;border:1px solid #a6a6a6;border-top-color:#7c7c7c;border-radius:4px 5px 4px 4px;box-shadow:0 0 0 0.5px rgba(150,150,150,0.35)"></div>
<div class="abs" style="left:133px;top:527px;width:889px;height:167px;background:#262626;border-top:1px solid #8c8c8c;border-radius:0 0 3px 3px"></div>
<div class="abs" style="left:133px;top:497px;width:120px;height:31px;background:#262626;border-right:1px solid #8c8c8c;border-radius:3px 5px 0 0"></div>
<div class="tabtxt" style="left:157.5px;top:504px;color:#fff">Results</div>
<div class="playc" style="left:229px;top:501px"></div>
<!-- chevron / pin -->
<svg class="abs" style="left:563px;top:496px" width="30" height="30" viewBox="0 0 30 30"><circle cx="15" cy="15.1" r="13.6" fill="#181818" stroke="#808080" stroke-width="1.1"/><path d="M9 10.6 L15 16.6 L21 10.6 M9 14.2 L15 20.2 L21 14.2" fill="none" stroke="#8a8a8a" stroke-width="1.1"/></svg>
<svg class="abs" style="left:604px;top:503px" width="16" height="18" viewBox="0 0 16 18"><defs><linearGradient id="ping" x1="0" y1="0" x2="1" y2="0"><stop offset="0" stop-color="#6e6e6e"/><stop offset="0.5" stop-color="#b4b4b4"/><stop offset="1" stop-color="#6e6e6e"/></linearGradient></defs><rect x="4.1" y="0.8" width="7.8" height="9.2" fill="url(#ping)"/><rect x="2.2" y="9.8" width="11.7" height="1.3" fill="#a4a4a4"/><rect x="7" y="11" width="2" height="3.9" fill="#8c8c8c"/></svg>
<!-- table -->
<div class="abs" style="left:138px;top:532px;width:855px;height:121px;background:#fff"></div>
<div class="abs" style="left:138px;top:532px;width:855px;height:26px;background:linear-gradient(to bottom,#f6f6f6,#e2e2e2 45%,#c8c8c8);border-bottom:1px solid #9a9a9a"></div>
<div class="abs" style="left:349px;top:533px;width:1px;height:24px;background:#9a9a9a"></div>
<div class="abs" style="left:444px;top:533px;width:1px;height:24px;background:#9a9a9a"></div>
<div class="abs" style="left:539px;top:533px;width:1px;height:24px;background:#9a9a9a"></div>
<div class="abs" style="left:634px;top:533px;width:1px;height:24px;background:#9a9a9a"></div>
<div class="abs" style="left:729px;top:533px;width:1px;height:24px;background:#9a9a9a"></div>
<div class="abs" style="left:142px;top:536px;font-size:14.5px;line-height:18px;color:#1a1a1a;letter-spacing:-0.5px">Measurement</div>
<div class="abs" style="left:350px;top:536px;width:90px;text-align:right;font-size:14.5px;line-height:18px;color:#1a1a1a;letter-spacing:-0.3px">Current</div>
<div class="abs" style="left:445px;top:536px;width:90px;text-align:right;font-size:14.5px;line-height:18px;color:#1a1a1a;letter-spacing:-0.3px">Minimum</div>
<div class="abs" style="left:540px;top:536px;width:90px;text-align:right;font-size:14.5px;line-height:18px;color:#1a1a1a;letter-spacing:-0.3px">Maximum</div>
<div class="abs" style="left:635px;top:536px;width:90px;text-align:right;font-size:14.5px;line-height:18px;color:#1a1a1a;letter-spacing:-0.3px">Count</div>
<!-- rows -->
<div class="row" style="top:558px;background:#e6f6e4;border:1px solid #3c98cc;border-radius:2px;left:137px;width:857px">
 <div class="cell nm" style="left:3px;top:-1px">Jitter[rms]</div><div class="badge" style="left:186.5px;top:4px;background:#d03878;color:#fff">4A</div>
 <div class="cell num" style="left:214px;width:90px;color:#555;top:-1px">? 5.099 ps</div><div class="cell num" style="left:309px;width:90px;color:#555;top:-1px">? 5.093 ps</div><div class="cell num" style="left:404px;width:90px;color:#555;top:-1px">? 5.367 ps</div><div class="cell num" style="left:498px;width:87px;color:#1414b4;font-size:13px;top:-1px">54</div>
</div>
<div class="row" style="top:582px;background:#fff">
 <div class="cell nm">Jitter[p-p]</div><div class="badge" style="background:#d03878;color:#fff">4A</div>
 <div class="cell num" style="left:214px;width:90px;color:#555">? 22.658 ps</div><div class="cell num" style="left:309px;width:90px;color:#555">? 22.658 ps</div><div class="cell num" style="left:404px;width:90px;color:#555">? 23.546 ps</div><div class="cell num" style="left:498px;width:87px;color:#1414b4;font-size:13px">54</div>
</div>
<div class="row" style="top:607px;height:22px;background:#e6f6e4;border-radius:4px">
 <div class="cell nm" style="top:-1px">Jitter[rms]</div><div class="badge" style="background:#c8b432;color:#222;top:3px">3A</div>
 <div class="cell num" style="top:-1px;left:214px;width:90px;color:#555">Source off</div><div class="cell num" style="top:-1px;left:309px;width:90px;color:#555;letter-spacing:-0.5px">---------</div><div class="cell num" style="top:-1px;left:404px;width:90px;color:#555;letter-spacing:-0.5px">---------</div><div class="cell num" style="top:-1px;left:498px;width:87px;color:#555;font-size:13px">0</div>
</div>
<div class="row" style="top:630px;background:#fff;height:22px">
 <div class="cell nm">Bit Rate</div><div class="badge" style="background:#d03878;color:#fff">4A</div>
 <div class="cell num" style="left:214px;width:90px;color:#1414b4">44.14 Gb/s</div><div class="cell num" style="left:309px;width:90px;color:#1414b4">42.28 Gb/s</div><div class="cell num" style="left:404px;width:90px;color:#1414b4">44.14 Gb/s</div><div class="cell num" style="left:498px;width:87px;color:#1414b4;font-size:13px">54</div>
</div>
<!-- scrollbar -->
<div class="abs" style="left:995px;top:532px;width:23px;height:121px;background:#d8d8d8;border:1px solid #a0a0a0;border-radius:2px"></div>
<div class="abs" style="left:998px;top:539px;border-bottom:8px solid #8a8a8a;border-left:8px solid transparent;border-right:8px solid transparent"></div>
<div class="abs" style="left:998px;top:637px;border-top:8px solid #8a8a8a;border-left:8px solid transparent;border-right:8px solid transparent"></div>
<div class="abs" style="left:997px;top:557px;width:19px;height:36px;border-radius:4px;background:linear-gradient(to right,#c8c8c8,#a8a8a8);border:1px solid #8a8a8a"></div>
<!-- buttons -->
<div class="rbtn" style="left:138px;width:29px"></div>
<svg class="abs" style="left:138px;top:658px" width="29" height="27" viewBox="0 0 29 27"><path d="M19.9 5.9 Q13.6 12 8.4 19.8" stroke="#ee1010" stroke-width="3.6" fill="none" stroke-linecap="round"/><path d="M10.8 6.4 Q14 12 17.8 18.8" stroke="#ee1010" stroke-width="2.8" fill="none" stroke-linecap="round"/></svg>
<div class="rbtn" style="left:172px;width:53px">Details...</div>
<div class="rbtn" style="left:230px;width:48px">Limits...</div>
<div class="rbtn" style="left:283px;width:48px">Setup...</div>
<!-- annotations -->
<div class="abs" style="left:866px;top:662px;width:18px;height:18px;background:#f4f4f4;border:1px solid #9a9a9a;border-radius:2px"></div>
<svg class="abs" style="left:866px;top:662px" width="18" height="18" viewBox="0 0 18 18"><path d="M4 9 L7.5 13.5 L14 3.5" stroke="#1a7a2a" stroke-width="2.2" fill="none"/></svg>
<div class="abs" style="left:890px;top:662px;font-size:14.5px;line-height:18px;color:#fff;letter-spacing:-0.3px;-webkit-text-stroke:0.25px #fff">Annotations</div>
<div class="rbtn" style="left:974px;width:41px"></div>
<svg class="abs" style="left:974px;top:658px" width="41" height="27" viewBox="0 0 41 27"><g fill="none" stroke="#8a8a8a" stroke-width="1.3"><rect x="6" y="6.5" width="29" height="14"/><path d="M6 11.2 H35 M6 15.8 H35 M15.7 6.5 V20.5 M25.3 6.5 V20.5"/></g></svg>
<!-- ================= STATUS BAR ================= -->
<div class="abs" style="left:0;top:697px;width:1024px;height:71px;background:linear-gradient(to bottom,#242424 0,#0a0a0a 5px,#000 12px,#050505 45%,#161616 100%)"></div>
<!-- left nav -->
<div class="abs" style="left:6px;top:701px;width:26px;height:31px;background:#3a3a3a;border-radius:14px 0 0 0"></div>
<div class="abs" style="left:6px;top:733px;width:26px;height:30px;background:#3a3a3a;border-radius:0 0 0 14px"></div>
<div class="abs" style="left:12px;top:709px;border-right:13px solid #4b4b4b;border-top:7px solid transparent;border-bottom:7px solid transparent"></div>
<svg class="abs" style="left:9px;top:738px" width="20" height="20" viewBox="0 0 20 20"><g fill="#494949"><rect x="1" y="1" width="5" height="4"/><rect x="7.5" y="1" width="5" height="4"/><rect x="14" y="1" width="5" height="4"/><rect x="1" y="7" width="5" height="4"/><rect x="7.5" y="7" width="5" height="4"/><rect x="14" y="7" width="5" height="4"/></g></svg>
<!-- channel box -->
<div class="abs" style="left:34px;top:700px;width:220px;height:64px;border:1px solid #9a9a9a;border-radius:5px;background:linear-gradient(to bottom,#1c1c1c,#000 40%)"></div>
<div class="abs" style="left:40px;top:737px;width:24px;height:24px;border-radius:50%;background:radial-gradient(circle at 40% 35%,#f4f4f4,#c4c4c4 70%,#a0a0a0);color:#222;font-size:12.5px;line-height:24px;text-align:center;letter-spacing:-0.5px">3A</div>
<div class="abs" style="left:68.5px;top:737px;font-size:11px;line-height:12.5px;letter-spacing:-0.1px;color:#fff;white-space:nowrap">2.0 mV/<br>-2.300 mV</div>
<div class="abs" style="left:148px;top:737px;width:24px;height:24px;border-radius:50%;background:radial-gradient(circle at 40% 35%,#f080a8,#d84080 60%,#b02860);color:#3a0a20;font-size:12.5px;line-height:24px;text-align:center;letter-spacing:-0.5px">4A</div>
<div class="abs" style="left:176.5px;top:737px;font-size:11px;line-height:12.5px;letter-spacing:-0.1px;color:#fff;white-space:nowrap">1.84 mW/<br>-727 µW</div>
<div class="abs" style="left:232px;top:742px;border-bottom:21px solid #505050;border-left:21px solid transparent"></div>
<div class="abs" style="left:243px;top:748px;font-size:13px;line-height:15px;font-weight:bold;color:#9c9c9c">3</div>
<!-- right nav -->
<div class="abs" style="left:256px;top:701px;width:26px;height:31px;background:#3a3a3a;border-radius:0 14px 0 0"></div>
<div class="abs" style="left:256px;top:733px;width:26px;height:30px;background:#a8a8a8;border-radius:0 0 14px 0"></div>
<div class="abs" style="left:263px;top:709px;border-left:13px solid #4b4b4b;border-top:7px solid transparent;border-bottom:7px solid transparent"></div>
<svg class="abs" style="left:259px;top:738.5px" width="19" height="19" viewBox="-10.5 -10.5 21 21"><g fill="#2a2a2a"><circle r="6.6"/><g id="gt"><rect x="-2" y="-9.6" width="4" height="19.2" rx="0.8"/></g><use href="#gt" transform="rotate(45)"/><use href="#gt" transform="rotate(90)"/><use href="#gt" transform="rotate(135)"/></g><circle r="3.3" fill="#a8a8a8"/></svg>
<!-- Timebase -->
<div class="sbox" style="left:551px;width:103px"><div class="hd" style="padding-left:2px">Timebase</div>
 <div class="ln" style="top:18px">8.33 ps/</div><div class="ln" style="top:32px">Pos: 24.05162 ns</div><div class="ln" style="top:46px">IPTB: Off</div></div>
<div class="abs" style="left:637px;top:703px;width:12px;height:12px;border-radius:50%;background:radial-gradient(circle at 40% 35%,#e8e8e8,#a8a8a8)"></div>
<!-- Acquisition -->
<div class="sbox" style="left:656px;width:100px"><div class="hd">Acquisition</div>
 <div class="ln" style="top:18px">Full Pattern: On</div><div class="ln" style="top:32px">4 pts/UI</div></div>
<!-- Frame Trigger -->
<div class="sbox" style="left:758px;width:100px"><div class="hd">Frame Trigger</div>
 <div class="ln" style="top:18px">Src: Front Panel</div><div class="ln" style="top:32px">42.000000 GBd</div><div class="ln" style="top:46px;color:#8c8c8c">32767 UI</div></div>
<!-- Pattern lock -->
<div class="sbox" style="left:860px;width:50px">
 <div class="abs" style="left:0;right:0;top:0;height:14px;border-bottom:1px solid #8a8a8a;background:#222;color:#22a832;font-style:italic;font-size:10px;line-height:13px;text-align:center">Pattern</div>
 <div class="abs" style="left:0;right:0;bottom:0;height:13px;border-top:1px solid #8a8a8a;background:#222;color:#22a832;font-style:italic;font-size:10px;line-height:11px;text-align:center">Lock</div>
</div>
<svg class="abs" style="left:874px;top:718px" width="22" height="28" viewBox="0 0 22 28"><path d="M6 12 V8 a5 5 0 0 1 10 0 V12" fill="none" stroke="#c8c8c8" stroke-width="2.6"/><rect x="2.5" y="11.5" width="17" height="14" rx="1.5" fill="#3cb44a"/><path d="M2.5 15 H19.5 M2.5 18.5 H19.5 M2.5 22 H19.5" stroke="#b8f0b8" stroke-width="1.4"/></svg>
<!-- Math / Signals -->
<div class="abs" style="left:913px;top:706px;width:52px;height:52px;border-radius:50%;background:#121212;border:1px solid #8a8a8a"></div>
<div class="abs" style="left:930px;top:709px;border-bottom:8px solid #a8a8a8;border-left:9px solid transparent;border-right:9px solid transparent"></div>
<div class="abs" style="left:912px;top:723px;width:55px;text-align:center;font-weight:bold;font-style:italic;font-size:13.5px;line-height:18px;color:#e8e8e8;letter-spacing:-0.6px">Math</div>
<div class="abs" style="left:968px;top:706px;width:52px;height:52px;border-radius:50%;background:#121212;border:1px solid #8a8a8a"></div>
<div class="abs" style="left:985px;top:709px;border-bottom:8px solid #a8a8a8;border-left:9px solid transparent;border-right:9px solid transparent"></div>
<div class="abs" style="left:967px;top:723px;width:55px;text-align:center;font-weight:bold;font-style:italic;font-size:13.5px;line-height:18px;color:#e8e8e8;letter-spacing:-0.8px">Signals</div>
</body>
</html>
